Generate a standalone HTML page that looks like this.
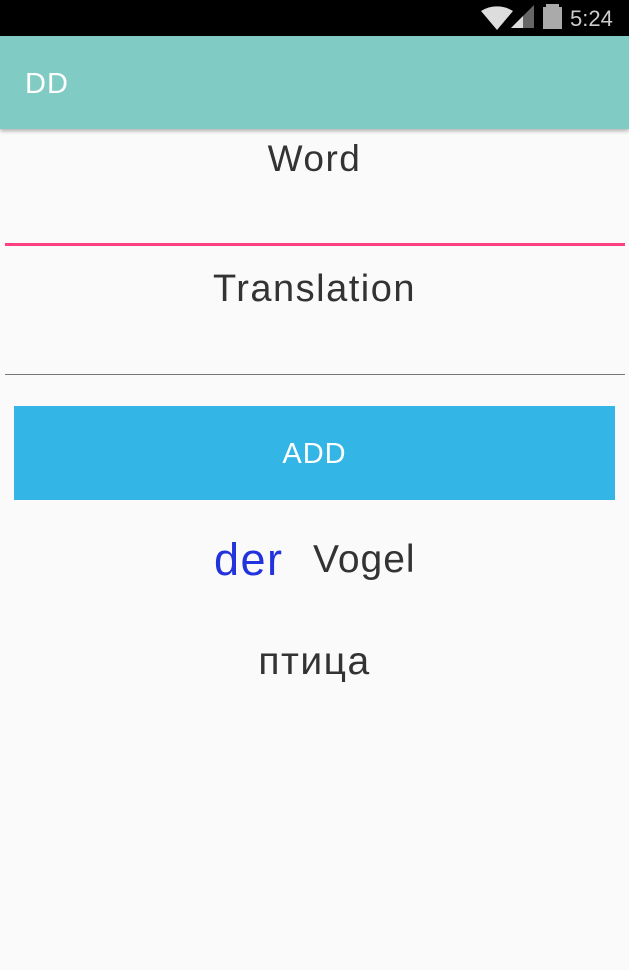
<!DOCTYPE html>
<html><head><style>
body{margin:0;width:629px;height:970px;background:#fafafa;font-family:"Liberation Sans","Noto Sans CJK SC",sans-serif;position:relative;overflow:hidden}
.sb{position:absolute;top:0;left:0;width:629px;height:36px;background:#000}
.ab{position:absolute;top:36px;left:0;width:629px;height:93px;background:#80cbc4;box-shadow:0 2px 4px rgba(0,0,0,.3)}
.t{position:absolute;color:#333;white-space:nowrap;letter-spacing:1.5px}
</style></head><body>
<div class="sb">
<svg width="629" height="36" style="position:absolute;left:0;top:0">
<path d="M481 11 A30 30 0 0 1 513 11 L497 30 Z" fill="#ddd"/>
<path d="M511 28 L534 5 L534 28 Z" fill="#666"/>
<path d="M511 28 L523 16 L523 28 Z" fill="#ddd"/>
<rect x="546" y="4" width="13" height="3" fill="#aaa"/>
<rect x="543" y="7" width="19" height="22" fill="#aaa"/>
<text x="570" y="26" font-family="Liberation Sans" font-size="22" fill="#ccc">5:24</text>
</svg>
</div>
<div class="ab"><div class="t" style="left:25px;top:32px;font-size:29px;color:#fff;letter-spacing:1px">DD</div></div>
<div class="t" style="left:0;width:629px;text-align:center;top:138px;font-size:37px">Word</div>
<div style="position:absolute;left:5px;top:243px;width:620px;height:3px;background:#ff4081"></div>
<div class="t" style="left:0;width:629px;text-align:center;top:268px;font-size:38px">Translation</div>
<div style="position:absolute;left:5px;top:374px;width:620px;height:1px;background:#777"></div>
<div style="position:absolute;left:14px;top:406px;width:601px;height:94px;background:#33b5e5;color:#fff;font-size:29px;text-align:center;line-height:96px;letter-spacing:1px">ADD</div>
<div class="t" style="left:214px;top:534px;font-size:45px;color:#2233dd">der</div>
<div class="t" style="left:313px;top:538px;font-size:39px;letter-spacing:1px">Vogel</div>
<div class="t" style="left:0;width:629px;text-align:center;top:640px;font-size:39px">птица</div>
</body></html>
